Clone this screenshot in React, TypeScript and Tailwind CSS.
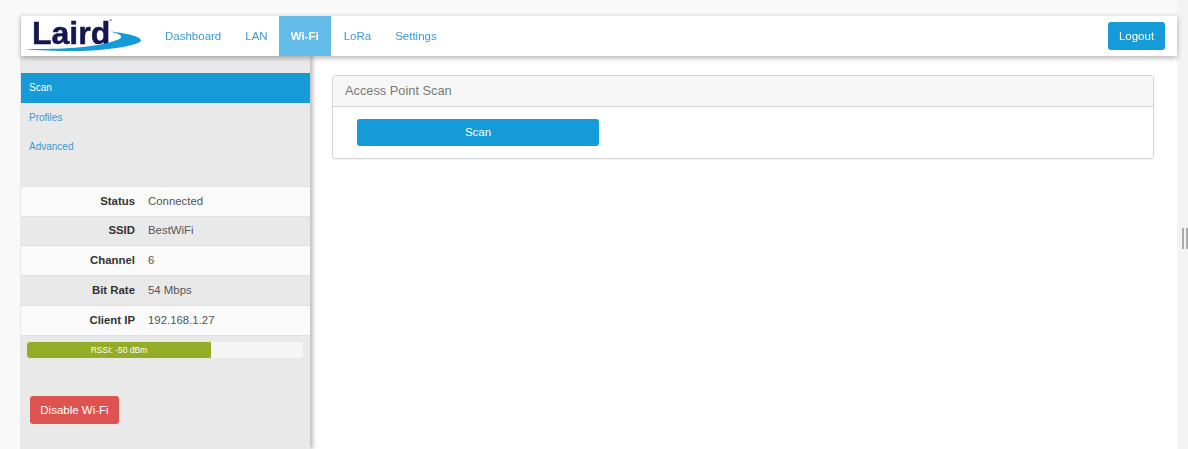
const navItems = ["Dashboard", "LAN", "Wi-Fi", "LoRa", "Settings"]
const sideItems = ["Scan", "Profiles", "Advanced"]
const statusRows = [
  ["Status", "Connected"],
  ["SSID", "BestWiFi"],
  ["Channel", "6"],
  ["Bit Rate", "54 Mbps"],
  ["Client IP", "192.168.1.27"],
]

function Logo() {
  return (
    <div className="relative h-[40px] w-[124px] shrink-0">
      <span className="absolute left-[11px] top-[-1px] text-[32px] leading-[36px] font-bold text-[#14174f] [-webkit-text-stroke:0.5px_#14174f]">
        Laird
      </span>
      <span className="absolute left-[87px] top-[3px] text-[4px] leading-[4px] text-[#14174f]">™</span>
      <svg className="absolute left-0 top-0" width="124" height="40" viewBox="0 0 124 40">
        <path d="M4 33 C35 33.5 75 32 96 24 C104 21 100 18 89 15.5 C105 17 120 20.5 120 24.5 C120 29 85 35 55 35 C35 35 15 34.5 4 33 Z" fill="#149bd8" />
      </svg>
    </div>
  )
}

export default function App() {
  return (
    <div className="h-[449px] overflow-hidden bg-[#f9f9f9] pt-[15px] pl-[20px] font-['Liberation_Sans',Arial,sans-serif] text-[#555]">
      <div className="flex w-[1157px] flex-col border-l border-[#ececec] bg-white">
        <header className="relative z-10 flex h-[41px] items-center border-t border-[#e8e8e8] bg-white shadow-[0_2px_5px_rgba(0,0,0,0.3)]">
          <Logo />
          <nav className="ml-[8px] flex h-full text-[11.5px]">
            {navItems.map((item) =>
              item === "Wi-Fi" ? (
                <a key={item} className="mr-[1px] ml-[-1px] flex w-[52px] items-center justify-center bg-[#63bbe7] pt-[1px] font-bold text-white">
                  {item}
                </a>
              ) : (
                <a key={item} className="flex items-center px-[12px] pt-[1px] text-[#3c9ad4]">
                  {item}
                </a>
              ),
            )}
          </nav>
          <button className="mr-[12px] ml-auto h-[28px] w-[57px] rounded-[3px] bg-[#149bd8] pt-[1px] text-[11.5px] text-white">
            Logout
          </button>
        </header>
        <div className="flex h-[393px]">
          <aside className="relative w-[289px] shrink-0 bg-[#e9e9e9] pt-[17px] shadow-[3px_0_4px_rgba(0,0,0,0.25)]">
            <ul className="text-[10px]">
              {sideItems.map((item) => (
                <li
                  key={item}
                  className={`flex h-[29.6px] items-center px-[8px] ${
                    item === "Scan" ? "bg-[#149bd8] text-white" : "text-[#3c9ad4]"
                  }`}
                >
                  {item}
                </li>
              ))}
            </ul>
            <div className="mt-[24px] border-t border-[#e0e0e0] text-[11.4px]">
              {statusRows.map(([label, value], i) => (
                <div
                  key={label}
                  className={`flex h-[29.8px] items-center border-b border-[#e0e0e0] ${
                    i % 2 === 0 ? "bg-[#fafafa]" : "bg-[#e9e9e9]"
                  }`}
                >
                  <span className="w-[114px] text-right font-bold text-[#333]">{label}</span>
                  <span className="ml-[13px] text-[#555]">{value}</span>
                </div>
              ))}
            </div>
            <div className="mx-[6px] mt-[6.5px] h-[16px] w-[276px] overflow-hidden rounded-[3px] bg-[#f5f5f5]">
              <div className="flex h-full w-[184px] items-center justify-center bg-[#93ad26] text-[8.5px] text-white">
                RSSI: -50 dBm
              </div>
            </div>
            <button className="mt-[38px] ml-[9px] h-[28px] w-[89px] rounded-[3px] bg-[#dc5350] text-[11.5px] text-white">
              Disable Wi-Fi
            </button>
          </aside>
          <main className="flex-1 pt-[19px] pl-[22px] pr-[23px]">
            <section className="h-[84px] rounded-[3px] border border-[#d6d6d6] shadow-[0_1px_1px_rgba(0,0,0,0.05)]">
              <div className="flex h-[31px] items-center border-b border-[#d6d6d6] bg-[#f7f7f7] px-[12px] text-[12.8px] text-[#777]">
                Access Point Scan
              </div>
              <div className="pt-[12px] pl-[24px]">
                <button className="h-[27px] w-[242px] rounded-[3px] bg-[#149bd8] text-[11.5px] text-white">
                  Scan
                </button>
              </div>
            </section>
          </main>
        </div>
      </div>
      <div className="fixed top-0 right-0 flex h-[449px] w-[11px] items-center bg-[#f3f3f3] pt-[28px] pl-[5px]">
        <div className="h-[21px] w-[6px] border-x-2 border-[#aaa]" />
      </div>
    </div>
  )
}
